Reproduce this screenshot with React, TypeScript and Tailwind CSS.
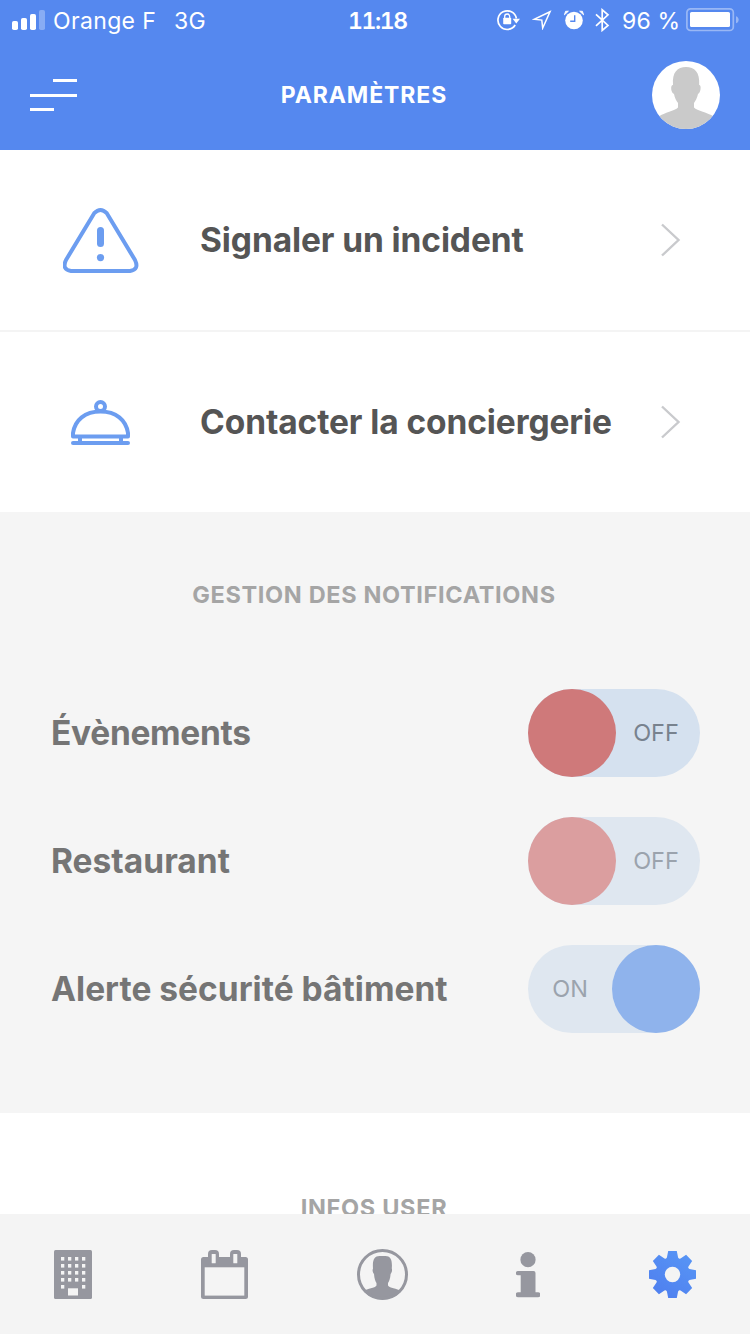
import type { ReactNode } from "react";

function SignalBars() {
  return (
    <svg width="34" height="20" viewBox="0 0 34 20" fill="#fff">
      <rect x="0" y="11" width="6" height="9" rx="1.8" />
      <rect x="9" y="8" width="6" height="12" rx="1.8" />
      <rect x="18" y="4" width="6" height="16" rx="1.8" />
      <rect x="27" y="0" width="6" height="20" rx="1.8" opacity="0.3" />
    </svg>
  );
}

function RotationLockIcon() {
  return (
    <svg width="24" height="22" viewBox="0 0 24 22" fill="none" stroke="#fff">
      <path d="M18.2 16A9.300 9.300 0 1 1 19.400 9.500" strokeWidth="1.7" />
      <path d="M15.600 9.800h7.400l-3.700 4.600z" fill="#fff" stroke="none" />
      <rect x="6.200" y="8.800" width="8" height="6.400" rx="0.800" fill="#fff" stroke="none" />
      <path d="M7.700 9.400V7.500a2.500 2.500 0 0 1 5 0v1.900" strokeWidth="1.300" />
    </svg>
  );
}

function LocationIcon() {
  return (
    <svg width="20" height="20" viewBox="0 0 20 20" fill="none" stroke="#fff" strokeWidth="1.5">
      <path d="M18 1.800L2.200 9.200l7.600.900.900 7.900z" strokeLinejoin="miter" />
    </svg>
  );
}

function AlarmIcon() {
  return (
    <svg width="20" height="20" viewBox="0 0 20 20">
      <circle cx="10" cy="10.500" r="8.800" fill="#fff" />
      <path d="M0.400 4.800L4.400 1.200L1.600 1.300zM19.600 4.800L15.600 1.200L18.400 1.300z" stroke="#fff" strokeWidth="0.900" fill="#fff" />
      <path d="M10.700 5.200v6H6.200" stroke="#5588ef" strokeWidth="1.400" fill="none" />
    </svg>
  );
}

function BluetoothIcon() {
  return (
    <svg width="15" height="24" viewBox="0 0 15 24" fill="none" stroke="#fff" strokeWidth="1.700">
      <path d="M1 6.400l12 11-5.800 5V1.800l5.800 5-12 11" />
    </svg>
  );
}

function BatteryIcon() {
  return (
    <svg width="54" height="24" viewBox="0 0 54 24">
      <rect x="0.900" y="0.900" width="46.400" height="21.600" rx="3.600" fill="none" stroke="#fff" strokeWidth="1.700" opacity="0.400" />
      <rect x="4" y="4" width="40" height="15" rx="1.600" fill="#fff" />
      <path d="M50 8.200c3.600 1 3.600 6 0 7z" fill="#fff" opacity="0.400" />
    </svg>
  );
}

function Avatar() {
  return (
    <svg width="68" height="68" viewBox="0 0 68 68">
      <defs>
        <clipPath id="avatar">
          <circle cx="34" cy="34" r="34" />
        </clipPath>
      </defs>
      <g clipPath="url(#avatar)">
        <rect width="68" height="68" fill="#fff" />
        <path
          d="M21 24C20 11 25.500 6 34 6s14 5 13.200 18c2.500 0 1.500 8-1.200 9-.8 4-2.500 7-4 9v4.500c3 3.500 14 5 19.500 9L68 68H0l7-12.500c5-4 16-5.500 19-9V42c-1.600-2-3.300-5-4-9-3-1-4-9-1-9z"
          fill="#cacaca"
        />
      </g>
    </svg>
  );
}

function StatusBar() {
  return (
    <div className="flex h-10 items-center pl-3 text-[23px] leading-10">
      <SignalBars />
      <span className="ml-[7px] w-[121px] whitespace-nowrap pt-[2px] tracking-[0.35px]">Orange F</span>
      <span className="w-[174px] whitespace-nowrap pt-[2px] tracking-[0.4px]">3G</span>
      <span className="w-[149px] whitespace-nowrap pt-[2px] font-semibold tabular-nums tracking-[-1.4px]">11:18</span>
      <RotationLockIcon />
      <span className="ml-[11px]"><LocationIcon /></span>
      <span className="ml-[12px]"><AlarmIcon /></span>
      <span className="ml-[11px]"><BluetoothIcon /></span>
      <span className="ml-[12px] w-[64px] whitespace-nowrap pt-[2px] tracking-[0.2px]">96 %</span>
      <BatteryIcon />
    </div>
  );
}

function Header() {
  return (
    <header className="h-[150px] shrink-0 bg-[#5588ef] text-white">
      <StatusBar />
      <div className="flex h-[110px] items-center justify-between px-[30px]">
        <div className="flex w-[47px] flex-col gap-[11.500px]">
          <div className="h-[3px] w-6 self-end bg-white" />
          <div className="h-[3px] w-[47px] bg-white" />
          <div className="h-[3px] w-6 bg-white" />
        </div>
        <h1 className="pb-[1px] pr-[1px] text-[23px] font-bold leading-[30px] tracking-[0.9px]">PARAMÈTRES</h1>
        <Avatar />
      </div>
    </header>
  );
}

function WarningIcon() {
  return (
    <svg className="mt-[2px]" width="76" height="66" viewBox="0 0 76 66">
      <path
        d="M31.200 5.200Q37.500-1.200 43.800 5.200L72 52Q76.500 61.500 67 63H8Q-1.500 61.500 3 52z"
        fill="none"
        stroke="#6c9df0"
        strokeWidth="4"
        strokeLinejoin="round"
      />
      <rect x="34" y="19" width="7" height="20" rx="3.500" fill="#6c9df0" />
      <circle cx="37.500" cy="49.600" r="3.600" fill="#6c9df0" />
    </svg>
  );
}

function BellIcon() {
  return (
    <svg className="mt-[2px]" width="60" height="46" viewBox="0 0 60 46" fill="none" stroke="#6c9df0">
      <circle cx="29.500" cy="6.500" r="4.500" strokeWidth="4" />
      <path d="M2 36.500V33C4 20 14 11.500 29.500 11.500S55 20 57 33v3.500z" strokeWidth="4" strokeLinejoin="round" />
      <path d="M9 37v6M50 37v6" strokeWidth="4" />
      <path d="M2 43h55" strokeWidth="4" strokeLinecap="round" />
    </svg>
  );
}

function LinkRow({ icon, label }: { icon: ReactNode; label: string }) {
  return (
    <div className="flex h-[180px] items-center">
      <div className="flex w-[200px] justify-center pl-[1.500px]">{icon}</div>
      <span className="flex-1 whitespace-nowrap text-[33.500px] font-bold leading-10 tracking-[-0.1px] text-[#555]">
        {label}
      </span>
      <svg className="mr-[69px]" width="20" height="34" viewBox="0 0 20 34" fill="none" stroke="#c9cacd" strokeWidth="2.400">
        <path d="M1 1.500L17.500 17L1 32.500" />
      </svg>
    </div>
  );
}

function ToggleRow({ label, on, dim, tight }: { label: string; on?: boolean; dim?: boolean; tight?: boolean }) {
  const knob = on ? "bg-[#8fb3ec]" : dim ? "bg-[#db9e9f]" : "bg-[#cf797a]";
  return (
    <div className="flex h-[88px] items-center justify-between">
      <span
        className={`whitespace-nowrap text-[33.500px] font-bold leading-10 text-[#757575] ${
          tight ? "tracking-[-0.3px]" : "tracking-[0.02px]"
        }`}
      >
        {label}
      </span>
      <div
        className={`flex h-[88px] w-[172px] items-center rounded-full ${on ? "flex-row-reverse" : ""} ${
          dim || on ? "bg-[#dfe7f0] text-[#9ba3ad]" : "bg-[#d5e1ef] text-[#78828e]"
        }`}
      >
        <div className={`size-[88px] shrink-0 rounded-full ${knob}`} />
        <span className={`flex-1 text-center text-[23.500px] leading-8 ${on ? "" : "pr-1"}`}>{on ? "ON" : "OFF"}</span>
      </div>
    </div>
  );
}

const windows = [0, 1, 2, 3, 4].flatMap((row) =>
  [0, 1, 2, 3].filter((col) => row < 4 || col === 0 || col === 3).map((col) => ({ x: 7 + col * 7, y: 7 + row * 7 })),
);

function BuildingIcon() {
  return (
    <svg width="38" height="49" viewBox="0 0 38 49">
      <rect width="38" height="49" rx="1.500" fill="#96979f" />
      {windows.map((w) => (
        <rect key={`${w.x}-${w.y}`} x={w.x} y={w.y} width="3.300" height="3.600" fill="#f4f4f4" />
      ))}
      <rect x="14" y="38.300" width="10" height="7.200" fill="#f4f4f4" />
    </svg>
  );
}

function CalendarIcon() {
  return (
    <svg width="47" height="49" viewBox="0 0 47 49">
      <rect y="7" width="47" height="42" rx="2.500" fill="#96979f" />
      <rect x="7" y="0" width="11" height="16" rx="4" fill="#96979f" />
      <rect x="29" y="0" width="11" height="16" rx="4" fill="#96979f" />
      <rect x="3.700" y="17.300" width="39.600" height="28.300" fill="#f4f4f4" />
      <rect x="10.700" y="4" width="4" height="9.300" rx="0.500" fill="#f4f4f4" />
      <rect x="32.300" y="4" width="4" height="9.300" rx="0.500" fill="#f4f4f4" />
    </svg>
  );
}

function ProfileIcon() {
  return (
    <svg width="52" height="52" viewBox="0 0 52 52">
      <defs>
        <clipPath id="profile">
          <circle cx="26" cy="26" r="25" />
        </clipPath>
      </defs>
      <g clipPath="url(#profile)" transform="translate(.5 .500)">
        <path
          d="M16.500 20C15.800 11 18 7.500 23 7.500h6C34 7.500 36 11 35.300 20c.8 2-.3 4.500-1.200 5.500-.3 5-1.600 7.500-2.600 9V37c2 3 8 2.500 14 6V52H6v-9c6-3.500 12-3 14-6v-2.500c-1-1.500-2.200-4-2.500-9-1-1-2-3.500-1-5.500z"
          fill="#96979f"
        />
      </g>
      <circle cx="26.500" cy="26.500" r="24" fill="none" stroke="#96979f" strokeWidth="3" />
    </svg>
  );
}

function InfoIcon() {
  return (
    <svg className="mt-[2px]" width="24" height="46" viewBox="0 0 24 46" fill="#96979f">
      <circle cx="12" cy="7.700" r="7.600" />
      <path d="M2 19h15.500a2 2 0 0 1 2 2v19.300H22a2.200 2.200 0 0 1 0 5H2.200a2.200 2.200 0 0 1 0-5H4.700V23.300H2a2.150 2.150 0 0 1 0-4.300z" />
    </svg>
  );
}

function GearIcon() {
  return (
    <svg width="47" height="47" viewBox="-23.500 -23.500 47 47">
      <defs>
        <linearGradient id="gear" gradientUnits="userSpaceOnUse" x1="14" y1="-20" x2="-14" y2="20">
          <stop offset="0" stopColor="#5794f5" />
          <stop offset="1" stopColor="#4f80ef" />
        </linearGradient>
        <mask id="gearShape">
          <circle r="17" fill="#fff" />
          {[0, 45, 90, 135, 180, 225, 270, 315].map((a) => (
            <path key={a} d="M-7.500-14L-5.600-17L-4.300-23.500H4.300L5.600-17L7.500-14z" fill="#fff" transform={`rotate(${a})`} />
          ))}
          <circle r="7.700" fill="#000" />
        </mask>
      </defs>
      <rect x="-23.500" y="-23.500" width="47" height="47" fill="url(#gear)" mask="url(#gearShape)" />
    </svg>
  );
}

function TabBar() {
  return (
    <nav className="flex h-[120px] shrink-0 items-center bg-[#f4f4f4]">
      <div className="ml-[54px]"><BuildingIcon /></div>
      <div className="ml-[109px]"><CalendarIcon /></div>
      <div className="ml-[108px]"><ProfileIcon /></div>
      <div className="ml-[108px]"><InfoIcon /></div>
      <div className="ml-[109px]"><GearIcon /></div>
    </nav>
  );
}

export default function App() {
  return (
    <div className="flex h-[1334px] w-[750px] flex-col overflow-hidden bg-white font-['Inter','Liberation_Sans',sans-serif] [&_svg]:block [&_svg]:shrink-0">
      <Header />
      <main className="flex-1 overflow-hidden">
        <LinkRow icon={<WarningIcon />} label="Signaler un incident" />
        <div className="h-[2px] bg-[#f4f4f4]" />
        <LinkRow icon={<BellIcon />} label="Contacter la conciergerie" />
        <section className="h-[601px] bg-[#f5f5f5] pl-[51px] pr-[50px] pt-[68px]">
          <h2 className="pr-[3px] text-center text-[23.500px] font-bold leading-[30px] tracking-[0.65px] text-[#a5a5a5]">
            GESTION DES NOTIFICATIONS
          </h2>
          <div className="mt-[79px] flex flex-col gap-10">
            <ToggleRow label="Évènements" tight />
            <ToggleRow label="Restaurant" dim />
            <ToggleRow label="Alerte sécurité bâtiment" on />
          </div>
        </section>
        <h2 className="pr-[2px] pt-[80px] text-center text-[23.500px] font-bold leading-[30px] tracking-[0.7px] text-[#a5a5a5]">
          INFOS USER
        </h2>
      </main>
      <TabBar />
    </div>
  );
}
